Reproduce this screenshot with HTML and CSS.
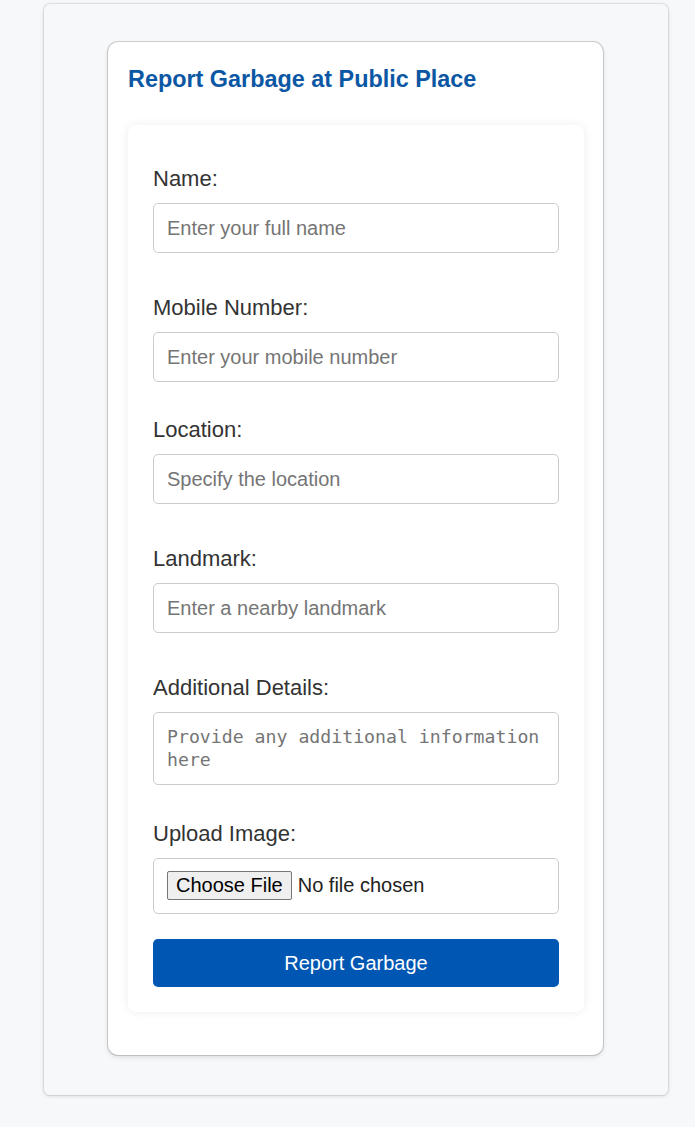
FILE: index.html
```html
<!DOCTYPE html>
<html lang="en">
<head>
<meta charset="utf-8">
<title>Report Garbage at Public Place</title>
<link rel="stylesheet" href="styles.css">
</head>
<body>
<div class="outer">
  <div class="card">
    <h3 class="title">Report Garbage at Public Place</h3>
    <form class="form">
      <label class="label" for="name">Name:</label>
      <input class="field field-wide" type="text" id="name" placeholder="Enter your full name">

      <label class="label" for="mobile">Mobile Number:</label>
      <input class="field field-tel" type="tel" id="mobile" placeholder="Enter your mobile number">

      <label class="label" for="location">Location:</label>
      <input class="field field-wide" type="text" id="location" placeholder="Specify the location">

      <label class="label" for="landmark">Landmark:</label>
      <input class="field field-wide" type="text" id="landmark" placeholder="Enter a nearby landmark">

      <label class="label" for="details">Additional Details:</label>
      <textarea class="field textarea" id="details" rows="2" placeholder="Provide any additional information here"></textarea>

      <label class="label" for="image">Upload Image:</label>
      <input class="field file" type="file" id="image">

      <button class="submit" type="button">Report Garbage</button>
    </form>
  </div>
</div>
</body>
</html>
```

FILE: styles.css
```css
* {
  box-sizing: border-box;
}

html, body {
  margin: 0;
  padding: 0;
  background: #f7f8fa;
  font-family: "Liberation Sans", Arial, sans-serif;
}

body {
  padding: 4px 0 32px;
}

.outer {
  width: 624px;
  margin: 0 0 0 44px;
  padding: 38px 0 40px 64px;
  background: #f7f8fa;
  border-radius: 6px;
  box-shadow: 0 0 0 1px rgba(0, 0, 0, 0.07), 0 1px 4px rgba(0, 0, 0, 0.14);
}

.card {
  width: 495px;
  padding: 24px 19px 43px 20px;
  background: #ffffff;
  border-radius: 10px;
  box-shadow: 0 0 0 1px rgba(0, 0, 0, 0.16), 0 2px 5px rgba(0, 0, 0, 0.12);
}

.title {
  margin: 0 0 32px 0;
  font-size: 23.4px;
  line-height: 27px;
  font-weight: bold;
  color: #0b57a4;
}

.form {
  display: flex;
  flex-direction: column;
  width: 456px;
  padding: 41px 25px 25px;
  background: #ffffff;
  border-radius: 8px;
  box-shadow: 0 0 10px rgba(0, 0, 0, 0.07);
}

.label {
  display: block;
  margin-bottom: 12px;
  font-size: 22px;
  line-height: 25px;
  color: #333333;
}

.field {
  display: block;
  width: 100%;
  height: 50px;
  padding: 12px 13px;
  font-family: "Liberation Sans", Arial, sans-serif;
  font-size: 20px;
  line-height: 24px;
  color: #333333;
  background: #ffffff;
  border: 1px solid #cccccc;
  border-radius: 5px;
  outline: none;
}

.field::placeholder {
  color: #757575;
}

.field-wide {
  margin-bottom: 42px;
}

.field-tel {
  margin-bottom: 35px;
}

.textarea {
  height: 73px;
  margin-bottom: 36px;
  padding: 12px 13px;
  font-family: "DejaVu Sans Mono", "Liberation Mono", monospace;
  font-size: 18.2px;
  line-height: 23px;
  resize: none;
}

.file {
  height: 56px;
  margin-bottom: 25px;
  padding: 12px 13px;
  font-size: 20px;
  line-height: 29px;
  color: #222222;
}

.file::file-selector-button {
  height: 29px;
  margin: 0 6px 0 0;
  padding: 0 8px;
  font-family: "Liberation Sans", Arial, sans-serif;
  font-size: 20px;
  line-height: 27px;
  color: #000000;
  background: #efefef;
  border: 1px solid #767676;
  border-radius: 2px;
}

.submit {
  display: block;
  width: 100%;
  height: 48px;
  padding: 0;
  font-family: "Liberation Sans", Arial, sans-serif;
  font-size: 20px;
  color: #ffffff;
  background: #0056b3;
  border: none;
  border-radius: 5px;
  cursor: pointer;
}
```
